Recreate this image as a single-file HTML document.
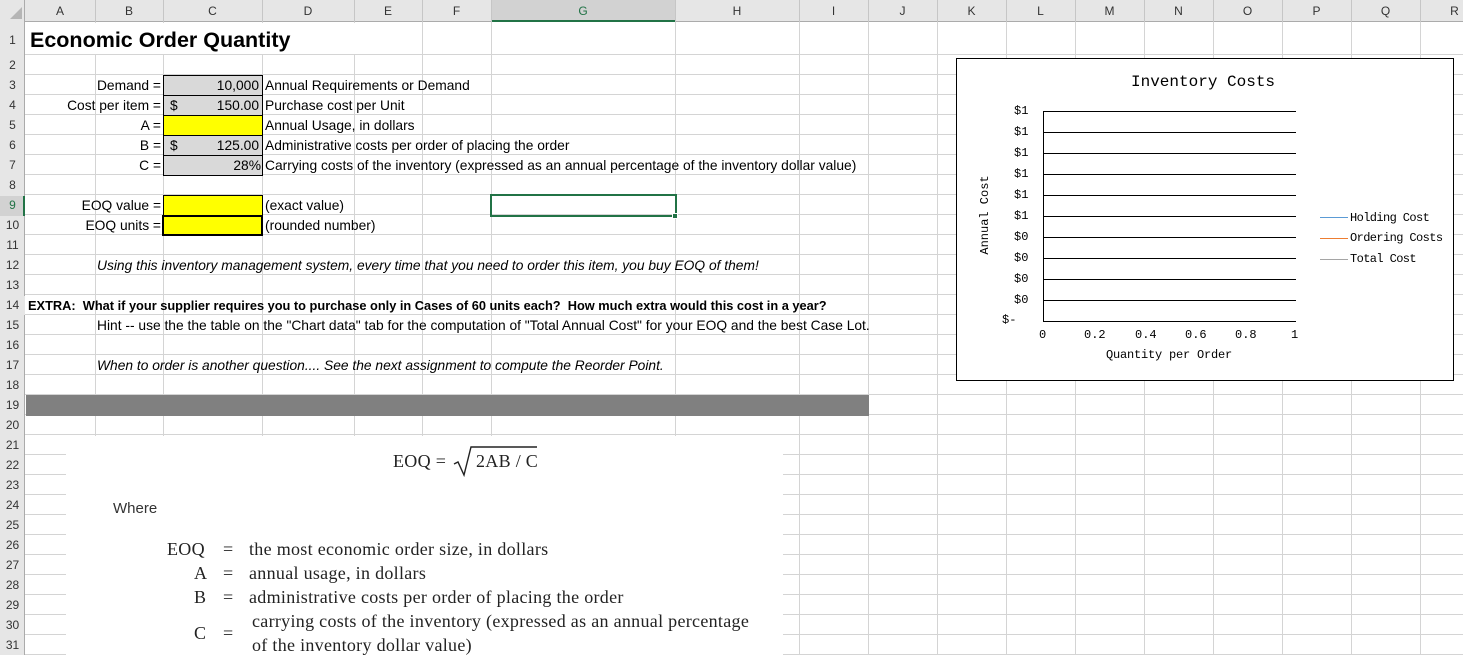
<!DOCTYPE html>
<html><head><meta charset="utf-8"><style>
*{margin:0;padding:0;box-sizing:border-box}
body{width:1463px;height:655px;overflow:hidden;background:#fff;position:relative;font-family:"Liberation Sans",sans-serif;font-size:13.8px;color:#000}
.a{position:absolute;white-space:nowrap}
.v{position:absolute;top:22px;width:1px;height:633px;background:#d4d4d4}
.hv{position:absolute;top:0;width:1px;height:22px;background:#c6c6c6}
.ch{position:absolute;top:0;height:22px;line-height:22px;text-align:center;color:#333;font-size:12px}
.rh{position:absolute;left:0;width:25px;text-align:center;color:#333;font-size:12px;line-height:20px}
.t{position:absolute;line-height:20px;white-space:nowrap}
.r{text-align:right}
.cm{font-family:"Liberation Mono",monospace;font-size:12px;position:absolute;white-space:nowrap}
.gl{position:absolute;left:1043px;width:253px;height:1px;background:#000}
.df{font-family:"Liberation Serif",serif;font-size:18px;letter-spacing:0.3px;position:absolute;white-space:nowrap;color:#222}
</style></head><body>
<div class="a" style="left:0;top:54px;width:1463px;height:1px;background:#d4d4d4"></div>
<div class="a" style="left:0;top:55px;width:1463px;height:600px;background:repeating-linear-gradient(to bottom,transparent 0,transparent 19px,#d4d4d4 19px,#d4d4d4 20px)"></div>
<div class="v" style="left:95px"></div><div class="v" style="left:163px"></div><div class="v" style="left:262px"></div><div class="v" style="left:354px"></div><div class="v" style="left:422px"></div><div class="v" style="left:491px"></div><div class="v" style="left:675px"></div><div class="v" style="left:799px"></div><div class="v" style="left:868px"></div><div class="v" style="left:937px"></div><div class="v" style="left:1006px"></div><div class="v" style="left:1075px"></div><div class="v" style="left:1144px"></div><div class="v" style="left:1213px"></div><div class="v" style="left:1282px"></div><div class="v" style="left:1351px"></div><div class="v" style="left:1420px"></div>
<div class="a" style="left:0;top:0;width:1463px;height:22px;background:#e6e6e6;border-bottom:1px solid #ababab"></div>
<div class="a" style="left:0;top:0;width:25px;height:655px;background:#e6e6e6;border-right:1px solid #ababab"></div>
<div class="a" style="left:491px;top:0;width:184px;height:22px;background:#d2d2d2;border-bottom:2px solid #217346"></div>
<div class="a" style="left:0;top:196px;width:25px;height:20px;background:#d2d2d2;border-right:2px solid #217346"></div>
<div class="a" style="left:10px;top:7px;width:0;height:0;border-left:12px solid transparent;border-bottom:12px solid #b5b5b5"></div>
<div class="hv" style="left:95px"></div><div class="hv" style="left:163px"></div><div class="hv" style="left:262px"></div><div class="hv" style="left:354px"></div><div class="hv" style="left:422px"></div><div class="hv" style="left:491px"></div><div class="hv" style="left:675px"></div><div class="hv" style="left:799px"></div><div class="hv" style="left:868px"></div><div class="hv" style="left:937px"></div><div class="hv" style="left:1006px"></div><div class="hv" style="left:1075px"></div><div class="hv" style="left:1144px"></div><div class="hv" style="left:1213px"></div><div class="hv" style="left:1282px"></div><div class="hv" style="left:1351px"></div><div class="hv" style="left:1420px"></div>
<div class="ch" style="left:25px;width:70px">A</div><div class="ch" style="left:95px;width:68px">B</div><div class="ch" style="left:163px;width:99px">C</div><div class="ch" style="left:262px;width:92px">D</div><div class="ch" style="left:354px;width:68px">E</div><div class="ch" style="left:422px;width:69px">F</div><div class="ch" style="left:491px;width:184px;color:#217346">G</div><div class="ch" style="left:675px;width:124px">H</div><div class="ch" style="left:799px;width:69px">I</div><div class="ch" style="left:868px;width:69px">J</div><div class="ch" style="left:937px;width:69px">K</div><div class="ch" style="left:1006px;width:69px">L</div><div class="ch" style="left:1075px;width:69px">M</div><div class="ch" style="left:1144px;width:69px">N</div><div class="ch" style="left:1213px;width:69px">O</div><div class="ch" style="left:1282px;width:69px">P</div><div class="ch" style="left:1351px;width:69px">Q</div><div class="ch" style="left:1420px;width:69px">R</div>
<div class="rh" style="top:30px">1</div>
<div class="rh" style="top:55px">2</div><div class="rh" style="top:75px">3</div><div class="rh" style="top:95px">4</div><div class="rh" style="top:115px">5</div><div class="rh" style="top:135px">6</div><div class="rh" style="top:155px">7</div><div class="rh" style="top:175px">8</div><div class="rh" style="top:195px;color:#217346">9</div><div class="rh" style="top:215px">10</div><div class="rh" style="top:235px">11</div><div class="rh" style="top:255px">12</div><div class="rh" style="top:275px">13</div><div class="rh" style="top:295px">14</div><div class="rh" style="top:315px">15</div><div class="rh" style="top:335px">16</div><div class="rh" style="top:355px">17</div><div class="rh" style="top:375px">18</div><div class="rh" style="top:395px">19</div><div class="rh" style="top:415px">20</div><div class="rh" style="top:435px">21</div><div class="rh" style="top:455px">22</div><div class="rh" style="top:475px">23</div><div class="rh" style="top:495px">24</div><div class="rh" style="top:515px">25</div><div class="rh" style="top:535px">26</div><div class="rh" style="top:555px">27</div><div class="rh" style="top:575px">28</div><div class="rh" style="top:595px">29</div><div class="rh" style="top:615px">30</div><div class="rh" style="top:635px">31</div>
<div class="a" style="left:26px;top:23px;width:395px;height:31px;background:#fff"></div>
<div class="t" style="left:30px;top:26px;font-size:21.5px;font-weight:bold;line-height:28px">Economic Order Quantity</div>
<div class="a" style="left:163px;top:75px;width:100px;height:41px;background:#d9d9d9;border:1px solid #000"></div>
<div class="a" style="left:163px;top:95px;width:100px;height:1px;background:#000"></div>
<div class="a" style="left:163px;top:115px;width:100px;height:21px;background:#ffff00;border:1px solid #000"></div>
<div class="a" style="left:163px;top:135px;width:100px;height:41px;background:#d9d9d9;border:1px solid #000"></div>
<div class="a" style="left:163px;top:155px;width:100px;height:1px;background:#000"></div>
<div class="a" style="left:163px;top:195px;width:100px;height:21px;background:#ffff00;border:1px solid #000"></div>
<div class="a" style="left:162px;top:215px;width:101px;height:21px;background:#ffff00;border:2px solid #000"></div>
<div class="t r" style="left:26px;width:135px;top:76px">Demand =</div>
<div class="t r" style="left:26px;width:135px;top:96px">Cost per item =</div>
<div class="t r" style="left:26px;width:135px;top:116px">A =</div>
<div class="t r" style="left:26px;width:135px;top:136px">B =</div>
<div class="t r" style="left:26px;width:135px;top:156px">C =</div>
<div class="t r" style="left:26px;width:135px;top:196px">EOQ value =</div>
<div class="t r" style="left:26px;width:135px;top:216px">EOQ units =</div>
<div class="t r" style="left:163px;width:96px;top:76px">10,000</div>
<div class="t" style="left:170px;top:96px">$</div><div class="t r" style="left:163px;width:96px;top:96px">150.00</div>
<div class="t" style="left:170px;top:136px">$</div><div class="t r" style="left:163px;width:96px;top:136px">125.00</div>
<div class="t r" style="left:163px;width:98px;top:156px">28%</div>
<div class="t" style="left:265px;top:76px">Annual Requirements or Demand</div>
<div class="t" style="left:265px;top:96px">Purchase cost per Unit</div>
<div class="t" style="left:265px;top:116px">Annual Usage, in dollars</div>
<div class="t" style="left:265px;top:136px">Administrative costs per order of placing the order</div>
<div class="t" style="left:265px;top:156px">Carrying costs of the inventory (expressed as an annual percentage of the inventory dollar value)</div>
<div class="t" style="left:265px;top:196px">(exact value)</div>
<div class="t" style="left:265px;top:216px">(rounded number)</div>
<div class="a" style="left:490px;top:194px;width:187px;height:23px;border:2px solid #217346"></div>
<div class="a" style="left:672px;top:213px;width:6px;height:6px;background:#217346;border:1px solid #fff"></div>
<div class="t" style="left:97px;top:256px;font-style:italic">Using this inventory management system, every time that you need to order this item, you buy EOQ of them!</div>
<div class="t" style="left:28px;top:296px;font-weight:bold;font-size:12.8px">EXTRA:&nbsp; What if your supplier requires you to purchase only in Cases of 60 units each?&nbsp; How much extra would this cost in a year?</div>
<div class="a" style="left:0;top:296px;width:25px;height:19px;background:#e6e6e6"></div>
<div class="rh" style="top:295px">14</div>
<div class="t" style="left:97px;top:316px">Hint -- use the the table on the "Chart data" tab for the computation of "Total Annual Cost" for your EOQ and the best Case Lot.</div>
<div class="t" style="left:97px;top:356px;font-style:italic">When to order is another question.... See the next assignment to compute the Reorder Point.</div>
<div class="a" style="left:26px;top:395px;width:843px;height:21px;background:#808080"></div>
<div class="a" style="left:956px;top:58px;width:498px;height:323px;background:#fff;border:1px solid #000"></div>
<div class="a" style="left:1131px;top:73px;font-family:'Liberation Mono',monospace;font-size:16px">Inventory Costs</div>
<div class="gl" style="top:111px"></div><div class="gl" style="top:132px"></div><div class="gl" style="top:153px"></div><div class="gl" style="top:174px"></div><div class="gl" style="top:195px"></div><div class="gl" style="top:216px"></div><div class="gl" style="top:237px"></div><div class="gl" style="top:258px"></div><div class="gl" style="top:279px"></div><div class="gl" style="top:300px"></div><div class="gl" style="top:321px"></div>
<div class="a" style="left:1043px;top:111px;width:1px;height:211px;background:#000"></div>
<div class="cm" style="left:1014px;top:104px">$1</div><div class="cm" style="left:1014px;top:125px">$1</div><div class="cm" style="left:1014px;top:146px">$1</div><div class="cm" style="left:1014px;top:167px">$1</div><div class="cm" style="left:1014px;top:188px">$1</div><div class="cm" style="left:1014px;top:209px">$1</div><div class="cm" style="left:1014px;top:230px">$0</div><div class="cm" style="left:1014px;top:251px">$0</div><div class="cm" style="left:1014px;top:272px">$0</div><div class="cm" style="left:1014px;top:293px">$0</div><div class="cm" style="left:1002px;top:313px">$-</div>
<div class="cm" style="left:1039px;top:328px">0</div><div class="cm" style="left:1084px;top:328px">0.2</div><div class="cm" style="left:1135px;top:328px">0.4</div><div class="cm" style="left:1185px;top:328px">0.6</div><div class="cm" style="left:1235px;top:328px">0.8</div><div class="cm" style="left:1291px;top:328px">1</div>
<div class="cm" style="left:1106px;top:348px;letter-spacing:-0.2px">Quantity per Order</div>
<div class="cm" style="left:945px;top:208px;transform:rotate(-90deg);transform-origin:center;width:80px;text-align:center">Annual Cost</div>
<div class="a" style="left:1320px;top:217px;width:28px;height:1px;background:#5b9bd5"></div>
<div class="a" style="left:1320px;top:238px;width:28px;height:1px;background:#ed7d31"></div>
<div class="a" style="left:1320px;top:259px;width:28px;height:1px;background:#a5a5a5"></div>
<div class="cm" style="left:1350px;top:211px;letter-spacing:-0.6px">Holding Cost</div>
<div class="cm" style="left:1350px;top:231px;letter-spacing:-0.6px">Ordering Costs</div>
<div class="cm" style="left:1350px;top:252px;letter-spacing:-0.6px">Total Cost</div>
<div class="a" style="left:66px;top:436px;width:717px;height:219px;background:#fff"></div>
<div class="df" style="left:393px;top:451px">EOQ =</div>
<svg class="a" style="left:452px;top:444px" width="90" height="34"><path d="M2 20 L6 18 L12 31 L19 3 L85 3" fill="none" stroke="#222" stroke-width="1.4"/></svg>
<div class="df" style="left:476px;top:451px">2AB / C</div>
<div class="a" style="left:113px;top:500px;font-size:15px;color:#333">Where</div>
<div class="df" style="left:167px;top:539px">EOQ</div><div class="df" style="left:223px;top:539px">=</div><div class="df" style="left:249px;top:539px">the most economic order size, in dollars</div>
<div class="df" style="left:194px;top:563px">A</div><div class="df" style="left:223px;top:563px">=</div><div class="df" style="left:249px;top:563px">annual usage, in dollars</div>
<div class="df" style="left:194px;top:587px">B</div><div class="df" style="left:223px;top:587px">=</div><div class="df" style="left:249px;top:587px">administrative costs per order of placing the order</div>
<div class="df" style="left:194px;top:623px">C</div><div class="df" style="left:223px;top:623px">=</div>
<div class="df" style="left:252px;top:611px">carrying costs of the inventory (expressed as an annual percentage</div>
<div class="df" style="left:252px;top:635px">of the inventory dollar value)</div>
</body></html>
